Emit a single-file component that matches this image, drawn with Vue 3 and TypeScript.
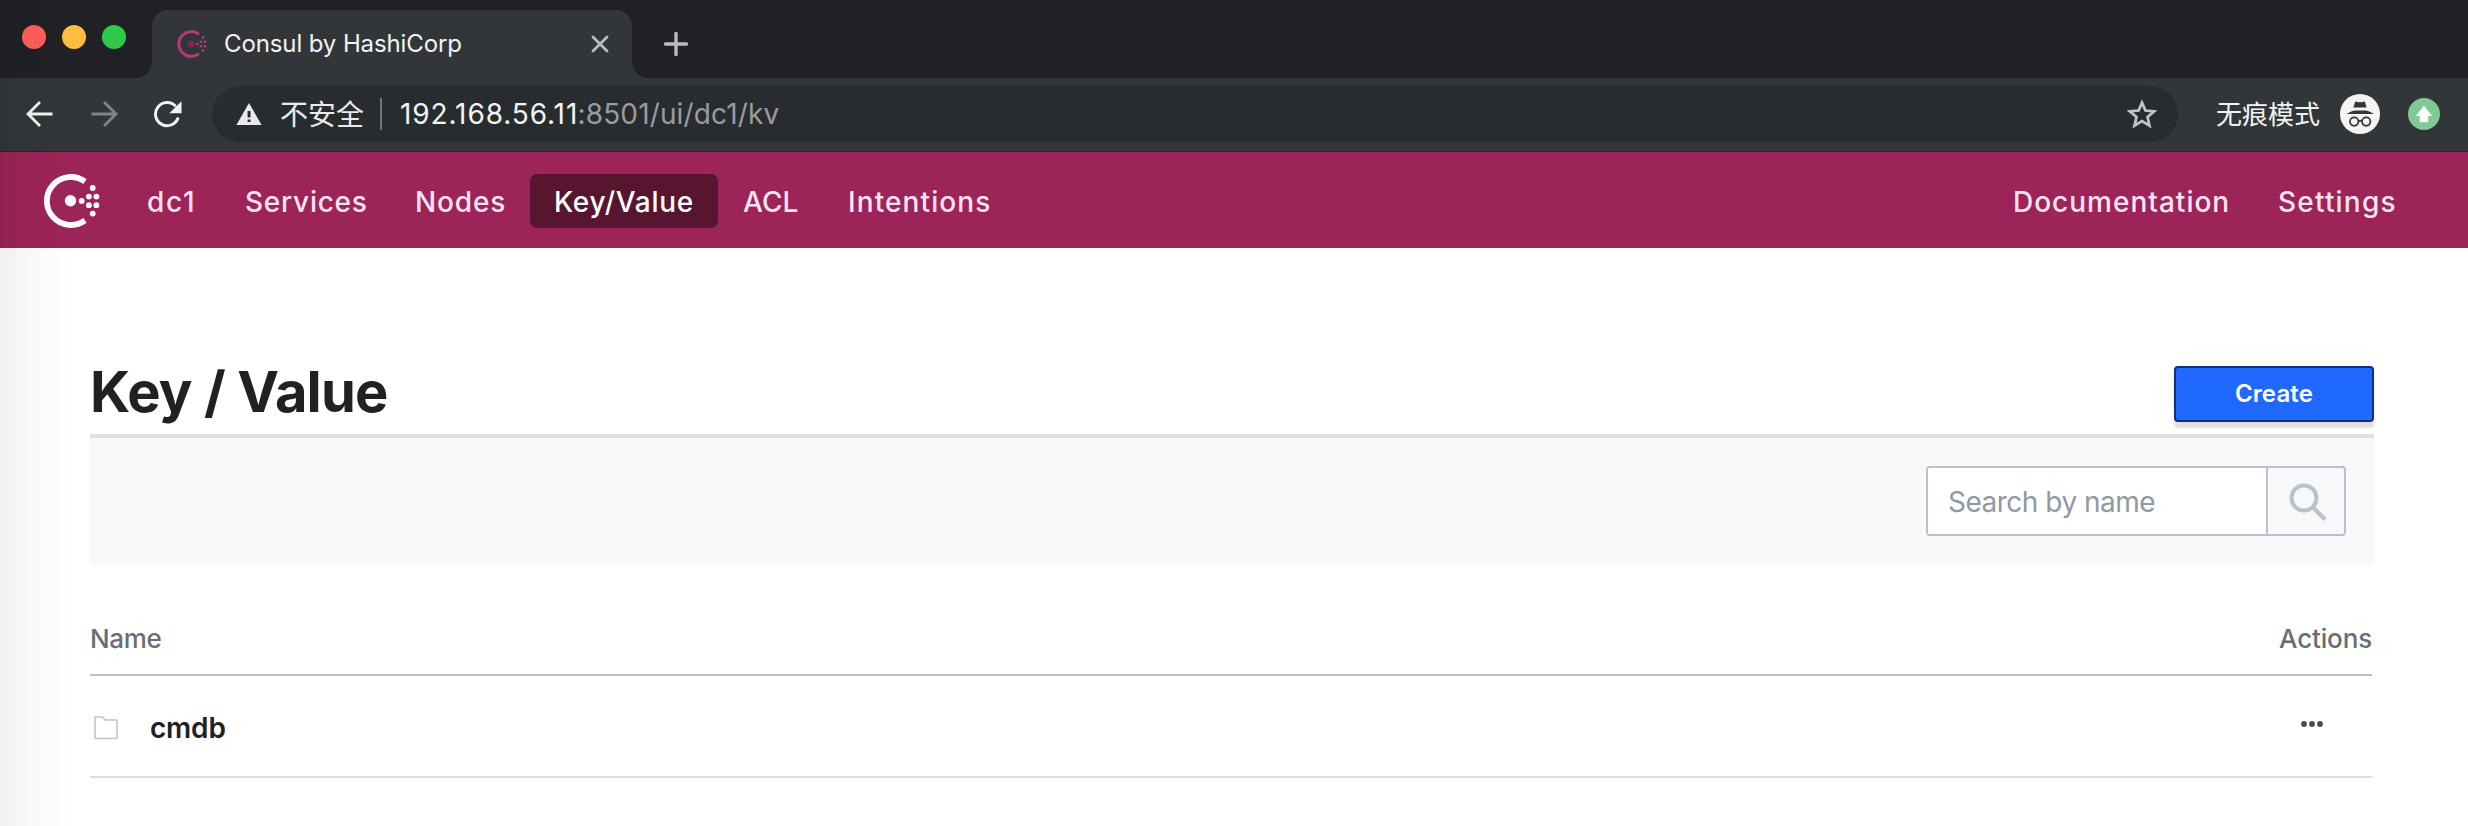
<script setup lang="ts">
import { ref } from 'vue'

interface NavItem {
  id: string
  label: string
}

const primaryNav: NavItem[] = [
  { id: 'dc', label: 'dc1' },
  { id: 'services', label: 'Services' },
  { id: 'nodes', label: 'Nodes' },
  { id: 'kv', label: 'Key/Value' },
  { id: 'acl', label: 'ACL' },
  { id: 'intentions', label: 'Intentions' },
]
const secondaryNav: NavItem[] = [
  { id: 'docs', label: 'Documentation' },
  { id: 'settings', label: 'Settings' },
]
const active = ref('kv')
const search = ref('')
const entries = ref<string[]>(['cmdb'])
</script>

<template>
  <div class="window">
    <header class="tabstrip">
      <div class="lights"><i class="red"></i><i class="amber"></i><i class="green"></i></div>
      <div class="tab">
        <svg class="favicon" width="30" height="30" viewBox="0 0 30 30">
          <path d="M22 5.300A12.400 12.400 0 1 0 22 24.700" fill="none" stroke="#b53a7c" stroke-width="3" />
          <circle cx="14.2" cy="15" r="3.3" fill="#8b2059" />
          <g fill="#b53a7c">
            <circle cx="20.3" cy="15" r="1.3" /><circle cx="24" cy="12.8" r="1.3" /><circle cx="24" cy="17.2" r="1.3" />
            <circle cx="28" cy="12.8" r="1.3" /><circle cx="28" cy="17.2" r="1.3" />
            <circle cx="26" cy="8.4" r="1.3" /><circle cx="26" cy="21.6" r="1.3" />
          </g>
        </svg>
        <span class="tab-title">Consul by HashiCorp</span>
        <svg class="close" width="18" height="18" viewBox="0 0 18 18">
          <path d="M2 2l14 14M16 2L2 16" stroke="#b9bcbf" stroke-width="2.8" stroke-linecap="round" />
        </svg>
      </div>
      <svg class="plus" width="24" height="24" viewBox="0 0 24 24">
        <path d="M12 1.5v21M1.5 12h21" stroke="#b9bcbf" stroke-width="3.4" stroke-linecap="round" />
      </svg>
    </header>

    <div class="toolbar">
      <svg class="back" width="28" height="28" viewBox="0 0 28 28">
        <path d="M26.5 14H2M14 2L2 14l12 12" fill="none" stroke="#f1f3f4" stroke-width="2.8" />
      </svg>
      <svg class="forward" width="28" height="28" viewBox="0 0 28 28">
        <path d="M1.5 14H26M14 2l12 12-12 12" fill="none" stroke="#818488" stroke-width="2.8" />
      </svg>
      <svg class="reload" width="28" height="28" viewBox="0 0 28 28">
        <path d="M24.2 17.5A11.6 11.6 0 1 1 21.7 6.3" fill="none" stroke="#f1f3f4" stroke-width="2.9" />
        <path d="M27.5 1.2v12H15.3z" fill="#f1f3f4" />
      </svg>
      <div class="omnibox">
        <svg class="warn" width="26" height="24" viewBox="0 0 26 24">
          <path d="M13 1L25.6 23H.4z" fill="#e8eaed" />
          <path d="M11.6 9h2.9v6.4h-2.9zM11.6 17.4h2.9v2.6h-2.9z" fill="#292c2f" />
        </svg>
        <span class="insecure">不安全</span>
        <span class="divider"></span>
        <span class="url"><span class="host">192.168.56.11</span><span class="path">:8501/ui/dc1/kv</span></span>
        <svg class="star" width="30" height="30" viewBox="0 0 30 30">
          <path d="M15 3.6l3.4 8 8.7.8-6.6 5.7 2 8.5-7.5-4.5-7.5 4.5 2-8.5-6.6-5.7 8.7-.8z" fill="none" stroke="#c2c5c8" stroke-width="2.7" />
        </svg>
      </div>
      <span class="incognito">无痕模式</span>
      <svg class="spy" width="40" height="40" viewBox="0 0 40 40">
        <circle cx="20" cy="20" r="20" fill="#f1f3f4" />
        <path d="M15.2 7.4c2 .1 2.900.9 4.900.9s2.900-.8 4.700-.9l1.700 6H13.500z" fill="#323639" />
        <path d="M6.500 20c3-1.900 6.600-3.300 9-3.500h9.500c2.500.2 6 1.600 9 3.500z" fill="#323639" />
        <g fill="none" stroke="#323639" stroke-width="1.800">
          <circle cx="14.200" cy="27.600" r="4.200" /><circle cx="26.200" cy="27.600" r="4.200" />
          <path d="M18.400 27.200q1.800-1.200 3.600 0" />
        </g>
      </svg>
      <svg class="update" width="32" height="32" viewBox="0 0 32 32">
        <circle cx="16" cy="16" r="16" fill="#81c995" />
        <path d="M16 7.800L24.200 18h-4v6.300h-8.400V18h-4z" fill="#fff" />
      </svg>
    </div>

    <nav class="consul-nav">
      <svg class="logo" width="56" height="54" viewBox="0 0 56 54">
        <path d="M41 7.600A24 24 0 1 0 41 46.400" fill="none" stroke="#fff" stroke-width="5.800" />
        <g fill="#fff">
          <circle cx="26.500" cy="26.800" r="5.700" />
          <circle cx="37.700" cy="26.900" r="2.900" />
          <circle cx="44.900" cy="22.600" r="2.900" /><circle cx="44.900" cy="31.200" r="2.900" />
          <circle cx="52.400" cy="22.600" r="2.900" /><circle cx="52.400" cy="31.200" r="2.900" />
          <circle cx="48.700" cy="14" r="2.900" /><circle cx="48.700" cy="39.600" r="2.900" />
        </g>
      </svg>
      <a v-for="n in primaryNav" :key="n.id" class="nav-link" :class="[n.id, { active: active === n.id }]" @click="active = n.id">{{ n.label }}</a>
      <span class="spacer"></span>
      <a v-for="n in secondaryNav" :key="n.id" class="nav-link" :class="n.id">{{ n.label }}</a>
    </nav>

    <main>
      <div class="heading">
        <h1>Key / Value</h1>
        <button class="create" type="button">Create</button>
      </div>
      <form class="filter" @submit.prevent>
        <div class="search">
          <input v-model="search" type="text" placeholder="Search by name" />
          <span class="search-icon">
            <svg width="40" height="40" viewBox="0 0 40 40">
              <circle cx="16" cy="16" r="12.500" fill="none" stroke="#bac1cc" stroke-width="4" />
              <path d="M25 25.500L37 37.400" stroke="#bac1cc" stroke-width="4.200" />
            </svg>
          </span>
        </div>
      </form>
      <div class="table">
        <div class="row head"><span>Name</span><span class="actions">Actions</span></div>
        <div v-for="e in entries" :key="e" class="row entry">
          <svg class="folder" width="24" height="24" viewBox="0 0 24 24">
            <path d="M1 22.500V1h7.500l2.500 3h12v18.500z" fill="none" stroke="#c0c5cd" stroke-width="1.600" stroke-linejoin="round" />
          </svg>
          <span class="key">{{ e }}</span>
          <svg class="dots" width="24" height="8" viewBox="0 0 24 8">
            <g fill="#4c4c4e"><circle cx="4" cy="4" r="2.900" /><circle cx="12" cy="4" r="2.900" /><circle cx="20" cy="4" r="2.900" /></g>
          </svg>
        </div>
      </div>
    </main>
    <div class="edge-shade"></div>
  </div>
</template>

<style>
body {
  background: #fff;
  overflow: hidden;
}
</style>

<style scoped>
.window {
  position: relative;
  width: 2468px;
  height: 826px;
  overflow: hidden;
  background: #fff;
  font-family: Inter, "Noto Sans CJK SC", sans-serif;
}
.window svg {
  display: block;
  flex: none;
}
.tabstrip {
  display: flex;
  height: 78px;
  background: #202124;
}
.lights {
  display: flex;
  gap: 16px;
  width: 130px;
  padding: 25px 0 0 22px;
  box-sizing: border-box;
}
.lights i {
  width: 24px;
  height: 24px;
  border-radius: 50%;
}
.red { background: #ff5f58; }
.amber { background: #ffbd3e; }
.green { background: #30ca4a; }
.tab {
  position: relative;
  display: flex;
  align-items: center;
  width: 480px;
  height: 68px;
  margin: 10px 0 0 22px;
  padding: 0 23px 0 25px;
  box-sizing: border-box;
  border-radius: 16px 16px 0 0;
  background: #323639;
}
.tab::before,
.tab::after {
  content: "";
  position: absolute;
  bottom: 0;
  width: 16px;
  height: 16px;
}
.tab::before {
  left: -16px;
  background: radial-gradient(circle at 0 0, transparent 15.5px, #323639 16.2px);
}
.tab::after {
  right: -16px;
  background: radial-gradient(circle at 100% 0, transparent 15.5px, #323639 16.2px);
}
.tab-title {
  margin-left: 17px;
  font-size: 24px;
  line-height: 30px;
  letter-spacing: -0.11px;
  color: #f1f3f4;
}
.close { margin-left: auto; }
.plus { margin: 32px 0 0 32px; }
.toolbar {
  display: flex;
  align-items: center;
  height: 74px;
  padding: 1px 28px 2px 26px;
  box-sizing: border-box;
  background: #323639;
  border-bottom: 1px solid #24272a;
}
.forward { margin-left: 36px; }
.reload { margin-left: 36px; }
.omnibox {
  display: flex;
  align-items: center;
  width: 1966px;
  height: 56px;
  margin: 0 0 0 30px;
  padding: 0 21px 0 24px;
  box-sizing: border-box;
  border-radius: 28px;
  background: #292c2f;
}
.insecure {
  margin: -2px 0 0 18px;
  font: 28px/40px "Noto Sans CJK SC", sans-serif;
  color: #e8eaed;
}
.divider {
  width: 2px;
  height: 32px;
  margin: 0 18px 0 16px;
  background: #72767a;
}
.url {
  display: flex;
  font-size: 28px;
  line-height: 40px;
}
.host {
  width: 177.5px;
  letter-spacing: 0.9px;
  color: #f4f5f6;
}
.path {
  letter-spacing: 0.14px;
  color: #989ca0;
}
.star { margin-left: auto; }
.incognito {
  width: 104px;
  margin: -2px 0 0 38px;
  font: 26px/40px "Noto Sans CJK SC", sans-serif;
  color: #f1f3f4;
}
.spy { margin-left: 20px; }
.update { margin-left: 28px; }
.consul-nav {
  display: flex;
  align-items: center;
  height: 96px;
  padding: 0 48px 0 44px;
  box-sizing: border-box;
  background: #9c2458;
}
.logo { margin: 2px 23px 0 0; }
.nav-link {
  height: 54px;
  margin-top: 2px;
  padding: 1px 0 0 24px;
  box-sizing: border-box;
  border-radius: 7px;
  font-size: 28px;
  font-weight: 500;
  line-height: 54px;
  white-space: nowrap;
  color: #ffe3f2;
}
.active {
  background: #581530;
  color: #fff;
}
.dc { width: 97px; letter-spacing: 1.7px; }
.services { width: 171px; padding-left: 25px; letter-spacing: 0.75px; }
.nodes { width: 139px; letter-spacing: 0.85px; }
.kv { width: 188px; letter-spacing: 0.7px; }
.acl { width: 106px; padding-left: 25px; letter-spacing: 0.1px; }
.intentions { width: 190px; letter-spacing: 1.1px; }
.docs { width: 266px; padding-left: 25px; letter-spacing: 1px; }
.settings { width: 166px; letter-spacing: 1.2px; }
.spacer { flex: 1; }
main { padding: 0 94px 0 90px; }
.heading {
  display: flex;
  justify-content: space-between;
  align-items: flex-end;
  height: 186px;
  padding-bottom: 7px;
  box-sizing: border-box;
}
h1 {
  margin: 0;
  font-size: 56px;
  font-weight: 700;
  line-height: 70px;
  letter-spacing: -0.85px;
  color: #1f2124;
}
.create {
  width: 200px;
  height: 56px;
  margin-bottom: 5px;
  padding: 0;
  border: 2px solid #102f76;
  border-radius: 4px;
  background: #1f69ff;
  box-shadow: 0 6px 2px rgba(0, 0, 0, 0.12);
  font: 600 24px/50px Inter, sans-serif;
  letter-spacing: 0.15px;
  color: #fff;
}
.filter {
  display: flex;
  justify-content: flex-end;
  height: 130px;
  padding: 28px 28px 0 0;
  box-sizing: border-box;
  border-top: 4px solid #dce0e6;
  background: #f7f8fa;
}
.search {
  display: flex;
  width: 420px;
  height: 70px;
  box-sizing: border-box;
  border: 2px solid #bac1cc;
  border-radius: 4px;
  overflow: hidden;
}
input {
  width: 338px;
  height: 66px;
  padding: 1px 0 0 20px;
  box-sizing: border-box;
  border: 0;
  outline: 0;
  background: #fff;
  font: 28px/60px Inter, sans-serif;
  letter-spacing: -0.5px;
}
input::placeholder {
  color: #9298a2;
  opacity: 1;
}
.search-icon {
  width: 80px;
  padding: 14px 0 0 20px;
  box-sizing: border-box;
  border-left: 2px solid #bac1cc;
}
.table {
  width: 2282px;
  padding-top: 34px;
}
.row {
  display: flex;
  box-sizing: border-box;
}
.head {
  justify-content: space-between;
  height: 78px;
  padding-top: 21px;
  border-bottom: 2px solid #bbbdcc;
  font-size: 26px;
  font-weight: 500;
  line-height: 40px;
  letter-spacing: -0.3px;
  color: #6a6d75;
}
.actions { letter-spacing: -0.15px; }
.entry {
  align-items: center;
  height: 102px;
  padding-left: 4px;
  padding-bottom: 1px;
  border-bottom: 2px solid #dcdee3;
}
.folder { margin-top: 4px; }
.key {
  margin: 5px 0 0 32px;
  font-size: 28px;
  font-weight: 600;
  line-height: 40px;
  letter-spacing: -0.2px;
  color: #1f2124;
}
.dots { margin: -3px 48px 0 auto; }
/* soft shadow falling in from the left window edge */
.edge-shade {
  position: absolute;
  inset: 0 auto 0 0;
  width: 80px;
  background: linear-gradient(90deg, rgba(0, 0, 0, 0.06), rgba(0, 0, 0, 0.02) 45%, rgba(0, 0, 0, 0.005) 80%, transparent);
  pointer-events: none;
}
</style>
